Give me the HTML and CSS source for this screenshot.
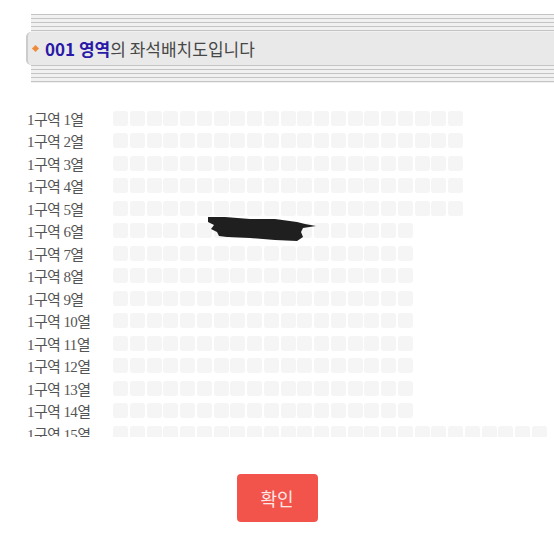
FILE: index.html
```html
<html>
	<head>
		<meta charset="utf-8">
		<link rel="stylesheet" href="styles.css">
	</head>
	<body>
		<div class="title">
			<div class="stripes"></div>
			<div class="band">
				<span class="dot"></span>
				<span class="zone">001 영역</span><span class="desc">의 좌석배치도입니다</span>
			</div>
			<div class="stripes"></div>
		</div>
		<div class="seatmap">
			<div id="rows"></div>
			<svg class="scribble" width="116" height="32" viewBox="0 0 116 32">
				<path d="M3,4 L20,4 L45,6 L70,6 L92,9 L100,11 L111,13 L98,15 L96,19 L98,24 L92,28 L70,27 L45,25 L22,24 L14,23 L12,19 L6,16 L9,12 L3,9 Z" fill="#1f1f1f"/>
			</svg>
		</div>
		<div class="actions">
			<button class="ok">확인</button>
		</div>
		<script>
			var counts = [21,21,21,21,21,18,18,18,18,18,18,18,18,18,26];
			var html = "";
			for (var i = 0; i < counts.length; i++) {
				html += '<div class="row"><span class="label">1구역 ' + (i + 1) + '열</span><span class="seats">';
				for (var j = 0; j < counts[i]; j++) {
					html += '<i class="seat"></i>';
				}
				html += '</span></div>';
			}
			document.getElementById("rows").innerHTML = html;
		</script>
	</body>
</html>
```

FILE: styles.css
```css
body{
	margin:0;
	background:#ffffff;
	font-family: "Noto Sans CJK KR", sans-serif;
}
.title{
	margin:14px 0 0 26px;
}
.stripes{
	margin-left:5px;
	height:18px;
	background: repeating-linear-gradient(to bottom, #c4c4c4 0px, #c4c4c4 1px, #f1f1f1 1px, #f1f1f1 4px);
}
.band{
	display:flex;
	align-items:center;
	height:33px;
	background:#e9e9e9;
	border-left:2px solid #cccccc;
	border-radius:5px 0 0 5px;
	padding-left:5px;
	font-size:17px;
}
.dot{
	width:5px;
	height:5px;
	background:#ef8a3a;
	transform:rotate(45deg);
	margin-right:7px;
}
.zone{
	color:#2a1aa8;
	font-weight:bold;
	white-space:pre;
}
.desc{
	color:#474747;
}
.seatmap{
	position:relative;
	margin-top:24px;
	height:330px;
	overflow:hidden;
}
.row{
	display:flex;
	align-items:center;
	height:22.5px;
}
.label{
	width:86px;
	padding-left:27px;
	flex-shrink:0;
	font-family: "Liberation Serif", "Noto Sans CJK KR", serif;
	font-size:15px;
	color:#555555;
	white-space:nowrap;
	letter-spacing:-0.6px;
}
.seats{
	display:flex;
	gap:1.75px;
}
.seat{
	display:block;
	width:15px;
	height:15px;
	background:#f5f5f5;
	border-radius:3px;
}
.scribble{
	position:absolute;
	left:205px;
	top:106px;
}
.actions{
	display:flex;
	justify-content:center;
	margin-top:37px;
}
.ok{
	width:81px;
	height:48px;
	background:#f2534b;
	border:none;
	border-radius:4px;
	color:#fde8e6;
	font-family: "Noto Sans CJK KR", sans-serif;
	font-size:18px;
	cursor:pointer;
}
```
